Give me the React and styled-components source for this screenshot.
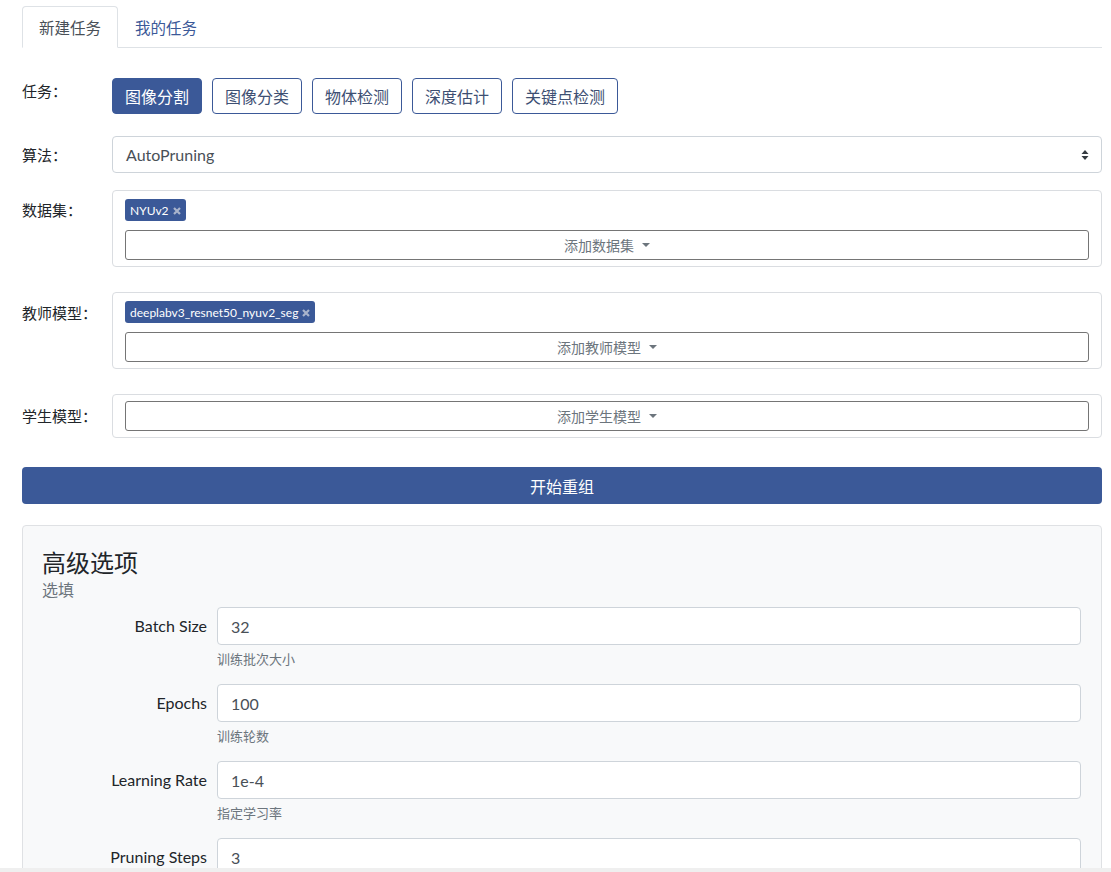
import React, { useState } from "react";
import styled, { createGlobalStyle, css } from "styled-components";

const PRIMARY = "#3b5998";
const FONT = `Lato, "Noto Sans CJK SC", "Noto Sans", sans-serif`;

const Global = createGlobalStyle`
  html, body { margin: 0; padding: 0; overflow: hidden; background: #fff; }
  body { font-family: ${FONT}; color: #212529; }
  * { box-sizing: border-box; }
`;

const Page = styled.div`
  padding: 6px 9px 0 22px;
  height: 872px;
`;

const TabBar = styled.div`
  display: flex;
  border-bottom: 1px solid #dee2e6;
  margin-bottom: 30px;
`;

const Tab = styled.div`
  height: 42px;
  padding: 0 16px;
  display: flex;
  align-items: center;
  font-size: 15.5px;
  border: 1px solid transparent;
  border-radius: 4px 4px 0 0;
  margin-bottom: -1px;
  color: ${PRIMARY};
  cursor: pointer;
  ${(p) =>
    p.$active &&
    css`
      color: #495057;
      background: #fff;
      border-color: #dee2e6 #dee2e6 #fff;
    `}
`;

const Row = styled.div`
  display: flex;
  align-items: flex-start;
  margin-bottom: ${(p) => p.$mb}px;
`;

const RowLabel = styled.div`
  width: 90px;
  flex: none;
  font-size: 15px;
  line-height: 22px;
  padding-top: ${(p) => p.$pt}px;
  color: #212529;
`;

const RowBody = styled.div`
  flex: 1;
  min-width: 0;
`;

const ButtonGroup = styled.div`
  display: flex;
  gap: 10px;
`;

const TaskButton = styled.button`
  height: 36px;
  padding: 0 12px;
  font-family: ${FONT};
  font-size: 16px;
  border-radius: 4px;
  border: 1px solid ${PRIMARY};
  background: ${(p) => (p.$active ? PRIMARY : "#fff")};
  color: ${(p) => (p.$active ? "#fff" : "#3d4f73")};
  cursor: pointer;
`;

const Select = styled.div`
  height: 37px;
  border: 1px solid #ced4da;
  border-radius: 4px;
  display: flex;
  align-items: center;
  justify-content: space-between;
  padding: 0 12px 0 13px;
  font-size: 16px;
  color: #495057;
  background: #fff;
`;

const MultiBox = styled.div`
  border: 1px solid #dadde1;
  border-radius: 4px;
  padding: 6px 12px;
  background: #fff;
`;

const TagRow = styled.div`
  display: flex;
  gap: 6px;
  margin: 2px 0 9px;
`;

const Tag = styled.span`
  height: 22px;
  display: inline-flex;
  align-items: center;
  gap: 4px;
  padding: 0 5px 0 5px;
  border-radius: 3px;
  background: ${PRIMARY};
  color: #fff;
  font-size: 12px;
`;

const TagClose = styled.svg`
  width: 8px;
  height: 8px;
  flex: none;
  margin-top: 1px;
`;

const DropButton = styled.div`
  height: 30px;
  border: 1px solid #757575;
  border-radius: 3px;
  display: flex;
  align-items: center;
  justify-content: center;
  gap: 8px;
  color: #6c757d;
  font-size: 14px;
  background: #fff;
`;

const Caret = styled.span`
  width: 0;
  height: 0;
  border-left: 4px solid transparent;
  border-right: 4px solid transparent;
  border-top: 4px solid #6c757d;
`;

const SubmitButton = styled.button`
  display: block;
  width: 100%;
  height: 37px;
  border: none;
  border-radius: 4px;
  background: ${PRIMARY};
  color: #fff;
  font-family: ${FONT};
  font-size: 16px;
  margin-bottom: 21px;
  cursor: pointer;
`;

const Card = styled.div`
  border: 1px solid #dfe1e4;
  border-radius: 4px;
  background: #f8f9fa;
  padding: 22px 20px 0 19px;
`;

const CardTitle = styled.h2`
  margin: 0;
  font-size: 24px;
  font-weight: 400;
  line-height: 29px;
  color: #212529;
`;

const CardSub = styled.div`
  font-size: 16px;
  line-height: 24px;
  color: #6c757d;
  margin: 1px 0 5px;
`;

const FormRow = styled.div`
  display: grid;
  grid-template-columns: 165px 1fr;
  column-gap: 10px;
  margin-bottom: 15px;
`;

const FormLabel = styled.label`
  text-align: right;
  font-size: 16px;
  line-height: 38px;
  color: #212529;
`;

const Input = styled.div`
  height: 38px;
  border: 1px solid #ced4da;
  border-radius: 4px;
  background: #fff;
  display: flex;
  align-items: center;
  padding-left: 13px;
  font-size: 16px;
  color: #495057;
`;

const Help = styled.div`
  grid-column: 2;
  margin-top: 4px;
  font-size: 13px;
  line-height: 20px;
  color: #6c757d;
`;

const BottomStrip = styled.div`
  position: fixed;
  left: 0;
  right: 0;
  bottom: 0;
  height: 4px;
  background: #efefef;
`;

function UpDown() {
  return (
    <svg width="8" height="12" viewBox="0 0 8 12">
      <path d="M4 1 L7.5 5 H0.5 Z" fill="#343a40" />
      <path d="M4 11 L7.5 7 H0.5 Z" fill="#343a40" />
    </svg>
  );
}

function CloseX() {
  return (
    <TagClose viewBox="0 0 8 8">
      <path d="M1 1 L7 7 M7 1 L1 7" stroke="#a9b4cc" strokeWidth="2.2" strokeLinecap="butt" />
    </TagClose>
  );
}

const tasks = ["图像分割", "图像分类", "物体检测", "深度估计", "关键点检测"];

const fields = [
  { label: "Batch Size", value: "32", help: "训练批次大小" },
  { label: "Epochs", value: "100", help: "训练轮数" },
  { label: "Learning Rate", value: "1e-4", help: "指定学习率" },
  { label: "Pruning Steps", value: "3", help: "剪枝步数" },
];

function Multi({ tags, placeholder }) {
  return (
    <MultiBox>
      {tags.length > 0 && (
        <TagRow>
          {tags.map((t) => (
            <Tag key={t}>
              {t}
              <CloseX />
            </Tag>
          ))}
        </TagRow>
      )}
      <DropButton>
        {placeholder}
        <Caret />
      </DropButton>
    </MultiBox>
  );
}

export default function App() {
  const [tab, setTab] = useState(0);
  const [task, setTask] = useState(0);
  return (
    <>
      <Global />
      <Page>
        <TabBar>
          <Tab $active={tab === 0} onClick={() => setTab(0)}>新建任务</Tab>
          <Tab $active={tab === 1} onClick={() => setTab(1)}>我的任务</Tab>
        </TabBar>

        <Row $mb={22}>
          <RowLabel $pt={2}>任务：</RowLabel>
          <RowBody>
            <ButtonGroup>
              {tasks.map((t, i) => (
                <TaskButton key={t} $active={i === task} onClick={() => setTask(i)}>
                  {t}
                </TaskButton>
              ))}
            </ButtonGroup>
          </RowBody>
        </Row>

        <Row $mb={17}>
          <RowLabel $pt={8}>算法：</RowLabel>
          <RowBody>
            <Select>
              AutoPruning
              <UpDown />
            </Select>
          </RowBody>
        </Row>

        <Row $mb={25}>
          <RowLabel $pt={9}>数据集：</RowLabel>
          <RowBody>
            <Multi tags={["NYUv2"]} placeholder="添加数据集" />
          </RowBody>
        </Row>

        <Row $mb={25}>
          <RowLabel $pt={10}>教师模型：</RowLabel>
          <RowBody>
            <Multi tags={["deeplabv3_resnet50_nyuv2_seg"]} placeholder="添加教师模型" />
          </RowBody>
        </Row>

        <Row $mb={29}>
          <RowLabel $pt={11}>学生模型：</RowLabel>
          <RowBody>
            <Multi tags={[]} placeholder="添加学生模型" />
          </RowBody>
        </Row>

        <SubmitButton>开始重组</SubmitButton>

        <Card>
          <CardTitle>高级选项</CardTitle>
          <CardSub>选填</CardSub>
          {fields.map((f) => (
            <FormRow key={f.label}>
              <FormLabel>{f.label}</FormLabel>
              <Input>{f.value}</Input>
              <Help>{f.help}</Help>
            </FormRow>
          ))}
        </Card>
      </Page>
      <BottomStrip />
    </>
  );
}
